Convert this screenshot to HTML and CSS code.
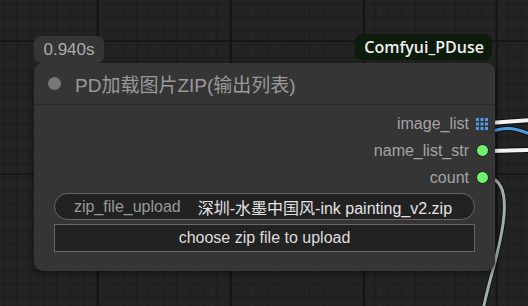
FILE: index.html
```html
<!DOCTYPE html>
<html lang="en">
<head>
    <meta charset="UTF-8">
    <title>PD加载图片ZIP</title>
    <link rel="stylesheet" href="styles.css">
</head>
<body>
    <div class="canvas">
        <!-- links coming out of the node -->
        <svg class="links" width="528" height="306" viewBox="0 0 528 306">
            <path d="M490 132 C505 126 515 128 530 134" stroke="#111" stroke-width="5" fill="none"/>
            <path d="M490 132 C505 126 515 128 530 134" stroke="#4a9be0" stroke-width="3" fill="none"/>
            <path d="M490 123 C505 122 515 121 530 120" stroke="#111" stroke-width="6" fill="none"/>
            <path d="M490 123 C505 122 515 121 530 120" stroke="#f2f2f2" stroke-width="4" fill="none"/>
            <path d="M490 151 L530 150" stroke="#111" stroke-width="6" fill="none"/>
            <path d="M490 151 L530 150" stroke="#f2f2f2" stroke-width="4" fill="none"/>
            <path d="M486 177 C500 178 506 190 504 215 C502 245 490 275 483 310" stroke="#111" stroke-width="5" fill="none"/>
            <path d="M486 177 C500 178 506 190 504 215 C502 245 490 275 483 310" stroke="#9fb0a0" stroke-width="3" fill="none"/>
        </svg>

        <div class="node">
            <div class="badge time">0.940s</div>
            <div class="badge source">Comfyui_PDuse</div>

            <div class="node-title">
                <span class="title-dot"></span>
                <span class="title-text">PD加载图片ZIP(输出列表)</span>
            </div>

            <div class="node-body">
                <div class="slot">
                    <span class="slot-label">image_list</span>
                    <svg class="slot-grid" width="12" height="12" viewBox="0 0 12 12">
                        <rect x="0" y="0" width="3" height="3"/><rect x="4.5" y="0" width="3" height="3"/><rect x="9" y="0" width="3" height="3"/>
                        <rect x="0" y="4.5" width="3" height="3"/><rect x="4.5" y="4.5" width="3" height="3"/><rect x="9" y="4.5" width="3" height="3"/>
                        <rect x="0" y="9" width="3" height="3"/><rect x="4.5" y="9" width="3" height="3"/><rect x="9" y="9" width="3" height="3"/>
                    </svg>
                </div>
                <div class="slot">
                    <span class="slot-label">name_list_str</span>
                    <span class="slot-dot"></span>
                </div>
                <div class="slot">
                    <span class="slot-label">count</span>
                    <span class="slot-dot"></span>
                </div>

                <div class="combo">
                    <span class="combo-label">zip_file_upload</span>
                    <span class="combo-value">深圳-水墨中国风-ink painting_v2.zip</span>
                </div>
                <div class="upload-btn">choose zip file to upload</div>
            </div>
        </div>
    </div>
</body>
</html>
```

FILE: styles.css
```css
/* Canvas */
body {
    margin: 0;
    padding: 0;
    font-family: "Liberation Sans", Arial, "Noto Sans CJK SC", sans-serif;
    background-color: #232323;
}

.canvas {
    position: relative;
    width: 528px;
    height: 306px;
    overflow: hidden;
    background-color: #232323;
    background-image:
        linear-gradient(90deg, #161616 2px, transparent 2px),
        linear-gradient(0deg, #161616 2px, transparent 2px),
        linear-gradient(90deg, #1c1c1c 1px, transparent 1px),
        linear-gradient(0deg, #1c1c1c 1px, transparent 1px);
    background-size: 133px 133px, 133px 133px, 13.3px 13.3px, 13.3px 13.3px;
    background-position: 97px 0, 0 42px, 3px 0, 0 5px;
}

.links {
    position: absolute;
    top: 0;
    left: 0;
}

/* Node */
.node {
    position: absolute;
    left: 34px;
    top: 63px;
    width: 461px;
    height: 208px;
    background-color: #353535;
    border-radius: 9px;
    box-shadow: 0 2px 6px rgba(0, 0, 0, 0.5);
    display: flex;
    flex-direction: column;
}

.badge {
    position: absolute;
    top: -27px;
    height: 27px;
    display: flex;
    align-items: center;
    font-size: 17px;
}

.badge.time {
    left: 0;
    width: 70px;
    justify-content: center;
    color: #ababab;
    background-color: #353535;
    border-radius: 7px;
}

.badge.source {
    right: 3px;
    top: -29px;
    height: 26px;
    padding: 0 8px 0 9px;
    color: #f0f0f0;
    font-weight: 600;
    font-family: "Open Sans", "Liberation Sans", sans-serif;
    font-size: 16px;
    background-color: #0d1b0d;
    border-radius: 7px;
}

.node-title {
    height: 41px;
    display: flex;
    align-items: center;
    padding-left: 14px;
    border-bottom: 1px solid #2b2b2b;
    background-color: #353535;
    border-radius: 9px 9px 0 0;
    position: relative;
    z-index: 1;
}

.title-dot {
    width: 13px;
    height: 13px;
    border-radius: 50%;
    background-color: #777;
}

.title-text {
    margin-left: 14px;
    font-size: 19px;
    color: #9a9a9a;
    font-family: "Liberation Sans", "Noto Sans CJK SC", sans-serif;
}

.node-body {
    display: flex;
    flex-direction: column;
    padding: 5px 20px 0 20px;
}

/* Output slots */
.slot {
    height: 27px;
    display: flex;
    align-items: center;
    justify-content: flex-end;
    margin-right: -14px;
}

.slot-label {
    font-size: 16px;
    color: #a3a3a3;
    margin-right: 7px;
}

.slot-dot {
    width: 11px;
    height: 11px;
    border-radius: 50%;
    background-color: #6ff06f;
    border: 1px solid #1a1a1a;
}

.slot-grid {
    fill: #4f9ae6;
    margin-right: 1px;
}

/* Widgets */
.combo {
    margin-top: 2px;
    height: 25px;
    border: 1px solid #666;
    border-radius: 14px;
    background-color: #222;
    display: flex;
    align-items: center;
    padding-left: 19px;
    font-size: 16px;
}

.combo-label {
    color: #999;
}

.combo-value {
    margin-left: 17px;
    color: #e4e4e4;
    font-family: "Liberation Sans", "Noto Sans CJK SC", sans-serif;
}

.upload-btn {
    margin-top: 4px;
    height: 26px;
    border: 1px solid #666;
    background-color: #222;
    color: #ddd;
    font-size: 16px;
    display: flex;
    align-items: center;
    justify-content: center;
}
```
